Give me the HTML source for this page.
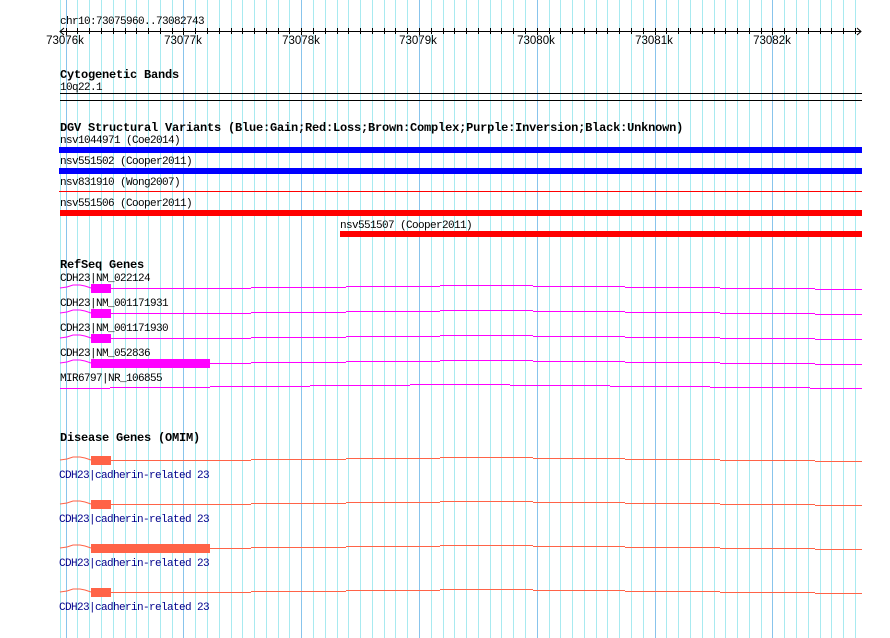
<!DOCTYPE html>
<html><head><meta charset="utf-8"><style>
html,body{margin:0;padding:0;background:#fff;width:890px;height:638px;overflow:hidden}
svg{display:block}
.t{font-family:"Liberation Mono",monospace;font-size:11px;letter-spacing:-0.6px;fill:#000}
.h{font-family:"Liberation Mono",monospace;font-size:12px;letter-spacing:-0.2px;font-weight:bold;fill:#000}
.s{font-family:"Liberation Sans",sans-serif;font-size:11.5px;fill:#000}
.d{font-family:"Liberation Mono",monospace;font-size:11px;letter-spacing:-0.6px;fill:#00008b}
</style></head><body>
<svg width="890" height="638" xmlns="http://www.w3.org/2000/svg" shape-rendering="crispEdges">
<g id="grid"></g>
<text class="t" x="60" y="24">chr10:73075960..73082743</text>
<line x1="60" y1="31.5" x2="861" y2="31.5" stroke="#000"/>
<path d="M64 28 L60 31.5 L64 35 M857 28 L861 31.5 L857 35" stroke="#000" fill="none" shape-rendering="auto"/>
<g id="ticks"></g>
<g class="s" text-anchor="middle">
<text x="65" y="44">73076k</text><text x="183" y="44">73077k</text><text x="301" y="44">73078k</text><text x="418" y="44">73079k</text><text x="536" y="44">73080k</text><text x="654" y="44">73081k</text><text x="772" y="44">73082k</text>
</g>
<text class="h" x="60" y="78">Cytogenetic Bands</text>
<text class="t" x="60" y="90">10q22.1</text>
<rect x="60" y="93" width="802" height="1" fill="#000"/>
<rect x="60" y="100" width="802" height="1" fill="#000"/>
<text class="h" x="60" y="131">DGV Structural Variants (Blue:Gain;Red:Loss;Brown:Complex;Purple:Inversion;Black:Unknown)</text>
<text class="t" x="60" y="143">nsv1044971 (Coe2014)</text>
<rect x="59" y="147" width="803" height="6" fill="#0000ff"/>
<text class="t" x="60" y="164">nsv551502 (Cooper2011)</text>
<rect x="59" y="168" width="803" height="6" fill="#0000ff"/>
<text class="t" x="60" y="185">nsv831910 (Wong2007)</text>
<rect x="59" y="191" width="803" height="1" fill="#ff0000"/>
<text class="t" x="60" y="206">nsv551506 (Cooper2011)</text>
<rect x="60" y="210" width="802" height="6" fill="#ff0000"/>
<text class="t" x="340" y="228">nsv551507 (Cooper2011)</text>
<rect x="340" y="231" width="522" height="6" fill="#ff0000"/>
<text class="h" x="60" y="268">RefSeq Genes</text>
<g id="genes"></g>
<text class="h" x="60" y="441">Disease Genes (OMIM)</text>
</svg>
<script>
var NS="http://www.w3.org/2000/svg";
function el(p,tag,a,txt){var e=document.createElementNS(NS,tag);for(var k in a)e.setAttribute(k,a[k]);if(txt)e.textContent=txt;p.appendChild(e);return e;}
var g=document.getElementById("grid");
el(g,"rect",{x:60,y:0,width:1,height:638,fill:"#a8eaf0"});
for(var i=0;i<68;i++){var x=Math.round(65.6+i*11.78);if(x>858)break;el(g,"rect",{x:x,y:0,width:1,height:638,fill:(i%10==0)?"#88c4ec":"#a8eaf0"});}
var t=document.getElementById("ticks");
for(var i=0;i<68;i++){var x=Math.round(65.6+i*11.78);if(x>858)break;el(t,"rect",{x:x,y:28,width:1,height:(i%10==0)?7:6,fill:"#000"});}
var G=document.getElementById("genes");
var steps=[157,251,346,440,533,625,720,815,862],off=[0,-1,-2,-3,-2,-1,0,1];
function gene(y,boxEnd,col,boxH){
 el(G,"polyline",{points:"60,"+(y+1)+" 67,"+y+" 73,"+(y-2)+" 80,"+(y-2)+" 85,"+(y-1)+" 91,"+(y+1),fill:"none",stroke:col,"stroke-width":1,"shape-rendering":"auto"});
 var d="";
 if(boxEnd<157){d+="M"+boxEnd+" "+(y+1.5)+"H157";}
 for(var i=0;i<8;i++){var x1=Math.max(steps[i],boxEnd);if(x1<steps[i+1])d+="M"+x1+" "+(y+1.5+off[i])+"H"+steps[i+1];}
 el(G,"path",{d:d,stroke:col,"stroke-width":1,fill:"none"});
 el(G,"rect",{x:91,y:y-3,width:boxEnd-91,height:boxH,fill:col});
}
var M="#ff00ff";
var rs=[["CDH23|NM_022124",281,111],["CDH23|NM_001171931",306,111],["CDH23|NM_001171930",331,111],["CDH23|NM_052836",356,210]];
rs.forEach(function(r){el(G,"text",{"class":"t",x:60,y:r[1]},r[0]);gene(r[1]+6,r[2],M,9);});
el(G,"text",{"class":"t",x:60,y:381},"MIR6797|NR_106855");
el(G,"path",{d:"M60 388.5H110M110 387.5H210M210 386.5H310M310 385.5H410M410 384.5H510M510 385.5H610M610 386.5H710M710 387.5H810M810 388.5H862",stroke:M,fill:"none"});
var O="#ff6347";
[[456,111],[500,111],[544,210],[588,111]].forEach(function(r){gene(r[0]+3,r[1],O,9);el(G,"text",{"class":"d",x:59,y:r[0]+22},"CDH23|cadherin-related 23");});
</script>
</body></html>
